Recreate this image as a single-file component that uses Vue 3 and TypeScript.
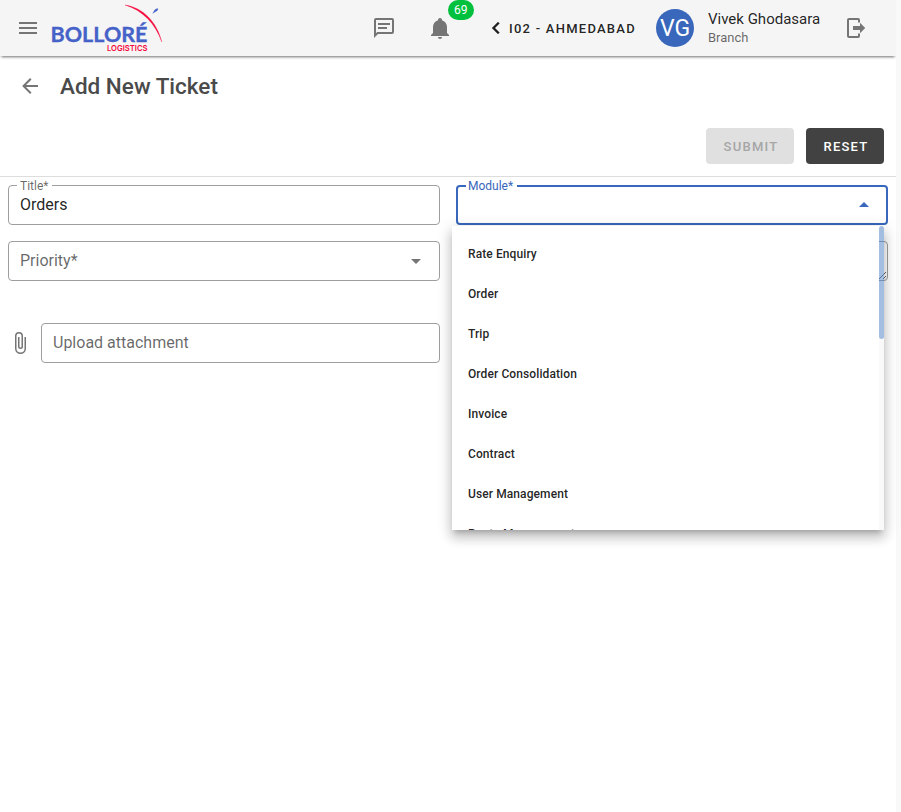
<script setup lang="ts">
import { ref } from 'vue'

interface Option {
  id: number
  label: string
}

const title = ref('Orders')
const description = ref('')
const notifications = ref(69)
const modules: Option[] = [
  'Rate Enquiry',
  'Order',
  'Trip',
  'Order Consolidation',
  'Invoice',
  'Contract',
  'User Management',
  'Route Management',
].map((label, id) => ({ id, label }))
</script>

<template>
  <div class="page">
    <div class="content">
      <header class="bar">
        <svg class="icon menu-icon" viewBox="0 0 24 24"><path d="M3,6H21V8H3V6M3,11H21V13H3V11M3,16H21V18H3V16Z" /></svg>
        <svg class="logo" viewBox="0 0 120 56" role="img" aria-label="Bolloré Logistics">
          <text class="brand" x="5.500" y="42.300" textLength="97" lengthAdjust="spacingAndGlyphs">BOLLORÉ</text>
          <text class="sub" x="62" y="50.800" textLength="40.500" lengthAdjust="spacingAndGlyphs">LOGISTICS</text>
          <path class="red" d="M80 5C98 7.500 112 22 116.800 42C110.500 24 98 10.500 80 5Z" />
          <path class="blue" d="M107.300 13.800L109.700 9.800L112.200 8.300L113.200 9L112.300 10.800Z" />
        </svg>
        <svg class="icon message-icon" viewBox="0 0 24 24"><path d="M20,2A2,2 0 0,1 22,4V16A2,2 0 0,1 20,18H6L2,22V4C2,2.890 2.900,2 4,2H20M4,4V17.170L5.170,16H20V4H4M6,7H18V9H6V7M6,11H15V13H6V11Z" /></svg>
        <div class="bell">
          <svg class="icon" viewBox="0 0 24 24"><path d="M21,19V20H3V19L5,17V11C5,7.900 7.030,5.170 10,4.290C10,4.190 10,4.100 10,4A2,2 0 0,1 12,2A2,2 0 0,1 14,4C14,4.100 14,4.190 14,4.290C16.970,5.170 19,7.900 19,11V17L21,19M14,21A2,2 0 0,1 12,23A2,2 0 0,1 10,21" /></svg>
          <span class="badge">{{ notifications }}</span>
        </div>
        <button class="branch" type="button">
          <svg class="chevron" viewBox="0 0 24 24"><path d="M15.410,16.580L10.830,12L15.410,7.410L14,6L8,12L14,18L15.410,16.580Z" /></svg>
          <span>I02 - Ahmedabad</span>
        </button>
        <div class="avatar">VG</div>
        <div class="user">
          <span class="name">Vivek Ghodasara</span>
          <span class="role">Branch</span>
        </div>
        <svg class="icon logout" viewBox="0 0 24 24"><path d="M4 2H13A2 2 0 0 1 15 4V6.500H13V4H4V20H13V17.500H15V20A2 2 0 0 1 13 22H4A2 2 0 0 1 2 20V4A2 2 0 0 1 4 2ZM8 10H15V6.800L20.200 12L15 17.200V14H8Z" /></svg>
      </header>

      <div class="heading">
        <svg class="icon back" viewBox="0 0 24 24"><path d="M20,11V13H8L13.500,18.500L12.080,19.920L4.160,12L12.080,4.080L13.500,5.500L8,11H20Z" /></svg>
        <h1>Add New Ticket</h1>
      </div>

      <div class="actions">
        <button class="btn submit" type="button" disabled>Submit</button>
        <button class="btn reset" type="button">Reset</button>
      </div>

      <form class="form" @submit.prevent>
        <fieldset class="field titled">
          <legend>Title*</legend>
          <input v-model="title" type="text" aria-label="Title" />
        </fieldset>
        <div class="select">
          <fieldset class="field titled active">
            <legend>Module*</legend>
            <svg class="icon caret" viewBox="0 0 24 24"><path d="M7,15L12,10L17,15H7Z" /></svg>
          </fieldset>
          <div class="dropdown">
            <ul class="options">
              <li v-for="option in modules" :key="option.id">{{ option.label }}</li>
            </ul>
            <div class="track">
              <div class="thumb"></div>
              <div class="rest"></div>
            </div>
          </div>
        </div>
        <div class="field plain">
          <span>Priority*</span>
          <svg class="icon caret" viewBox="0 0 24 24"><path d="M7,10L12,15L17,10H7Z" /></svg>
        </div>
        <textarea v-model="description" class="field area" aria-label="Description"></textarea>
        <div class="attachment">
          <svg class="icon" viewBox="0 0 24 24"><path d="M16.500,6V17.500A4,4 0 0,1 12.500,21.500A4,4 0 0,1 8.500,17.500V5A2.500,2.500 0 0,1 11,2.500A2.500,2.500 0 0,1 13.500,5V15.500A1,1 0 0,1 12.500,16.500A1,1 0 0,1 11.500,15.500V6H10V15.500A2.500,2.500 0 0,0 12.500,18A2.500,2.500 0 0,0 15,15.500V5A4,4 0 0,0 11,1A4,4 0 0,0 7,5V17.500A5.500,5.500 0 0,0 12.500,23A5.500,5.500 0 0,0 18,17.500V6H16.500Z" /></svg>
          <div class="field plain"><span>Upload attachment</span></div>
        </div>
      </form>
    </div>
    <div class="page-scroll"></div>
  </div>
</template>

<style>
body {
  background: #fff;
  overflow: hidden;
}
</style>

<style scoped>
.page,
.page * {
  box-sizing: border-box;
}
.page {
  display: flex;
  height: 812px;
  font-family: Roboto, sans-serif;
  color: rgba(0, 0, 0, 0.87);
}
.content {
  width: 896px;
}
.page-scroll {
  width: 5px;
  background: #f9f9f9;
}
.icon {
  display: block;
  flex: none;
  width: 24px;
  height: 24px;
  fill: #757575;
}
.bar {
  display: flex;
  align-items: center;
  height: 56px;
  padding-left: 16px;
  background: #f5f5f5;
  box-shadow: 0 3px 2px -2px rgba(0, 0, 0, 0.3), 0 2px 3px -1px rgba(0, 0, 0, 0.25), 0 1px 4px -1px rgba(0, 0, 0, 0.12);
}
.logo {
  width: 120px;
  height: 56px;
  margin-left: 5px;
}
.brand {
  font: 700 20px Lato, sans-serif;
  fill: #4562c8;
  stroke: #4562c8;
  stroke-width: 0.300;
}
.sub {
  font: 600 8px Inter, sans-serif;
  fill: #f5093c;
}
.red {
  fill: #f5093c;
  stroke: #f5093c;
  stroke-width: 0.300;
}
.blue {
  fill: #4562c8;
}
.message-icon {
  margin-left: 207px;
}
.bell {
  position: relative;
  margin-left: 32px;
}
.badge {
  position: absolute;
  left: 20px;
  top: -16px;
  height: 20px;
  padding: 4px 6px;
  border-radius: 10px;
  background: #00c03e;
  color: #fff;
  font-size: 12px;
  line-height: 12px;
}
button {
  border: 0;
  font: 500 13px Roboto, sans-serif;
  letter-spacing: 1.250px;
  text-transform: uppercase;
}
.branch {
  display: flex;
  align-items: center;
  width: 151px;
  margin-left: 32px;
  padding: 0;
  background: none;
  color: rgba(0, 0, 0, 0.87);
  white-space: nowrap;
}
.chevron {
  flex: none;
  width: 24px;
  height: 24px;
  margin-right: 1px;
  fill: currentColor;
  stroke: currentColor;
  stroke-width: 0.300;
}
.avatar {
  width: 38px;
  height: 38px;
  margin-left: 21px;
  border-radius: 50%;
  background: #3867bb;
  color: #fff;
  font-size: 23px;
  line-height: 40px;
  text-align: center;
}
.user {
  display: flex;
  flex-direction: column;
  width: 137px;
  margin-left: 14px;
}
.name {
  font-size: 15px;
  line-height: 19px;
}
.role {
  color: rgba(0, 0, 0, 0.6);
  font-size: 13px;
  line-height: 18px;
}
.heading {
  display: flex;
  align-items: center;
  gap: 18px;
  height: 60px;
  padding-left: 18px;
}
.back {
  fill: #757575;
}
h1 {
  margin: 0;
  color: #4a4a4a;
  font-size: 22.500px;
  font-weight: 500;
  line-height: 32px;
}
.actions {
  display: flex;
  justify-content: flex-end;
  gap: 12px;
  height: 61px;
  padding: 12px 12px 12px 0;
  border-bottom: 1px solid #ddd;
}
.btn {
  height: 36px;
  padding: 0 0 0 2px;
  border-radius: 4px;
}
.submit {
  width: 88px;
  background: #e0e0e0;
  color: #a6a6a6;
}
.reset {
  width: 78px;
  background: #424242;
  color: #fff;
}
.form {
  display: grid;
  grid-template-columns: 432px 432px;
  grid-template-rows: 40px 40px 40px;
  column-gap: 16px;
  padding: 8px;
  row-gap: 16px;
}
.field {
  display: flex;
  min-width: 0;
  margin: 0;
  border: 1px solid #9e9e9e;
  border-radius: 4px;
  background: #fff;
}
.titled {
  height: 47px;
  margin-top: -7px;
  padding: 0 11px 0 8px;
  background: none;
}
legend {
  height: 15px;
  padding: 0 4px 0 3px;
  color: rgba(0, 0, 0, 0.6);
  font-size: 12px;
  line-height: 17px;
}
input {
  display: block;
  width: 100%;
  height: 22px;
  padding: 0 3px;
  border: 0;
  outline: 0;
  background: none;
  color: rgba(0, 0, 0, 0.87);
  font: 16px Roboto, sans-serif;
}
.active {
  height: 46px;
  margin-top: -6px;
  padding-right: 10px;
  border: 2px solid #3867bb;
}
.active legend {
  height: 14px;
  padding: 0 4px 0 2px;
  color: #3867bb;
  line-height: 14px;
}
.active .caret {
  margin: -1px 0 0 auto;
  fill: #3867bb;
}
.select {
  position: relative;
}
.dropdown {
  position: absolute;
  z-index: 2;
  top: 41px;
  left: -4px;
  display: flex;
  width: 432px;
  height: 304px;
  overflow: hidden;
  box-shadow: 0 5px 5px -3px rgba(0, 0, 0, 0.2), 0 8px 10px 1px rgba(0, 0, 0, 0.14), 0 3px 14px 2px rgba(0, 0, 0, 0.12);
}
.options {
  flex: 1;
  height: 336px;
  margin: 0;
  padding: 8px 16px;
  background: #fff;
  list-style: none;
}
.options li {
  height: 40px;
  font-size: 12px;
  font-weight: 500;
  letter-spacing: 0.100px;
  line-height: 40px;
}
.track {
  display: flex;
  flex-direction: column;
  width: 5px;
  height: 304px;
}
.thumb {
  height: 113px;
  border-radius: 3px;
  background: rgba(73, 125, 196, 0.5);
}
.rest {
  flex: 1;
  background: #f9f9f9;
}
.plain {
  align-items: center;
  justify-content: space-between;
  height: 40px;
  padding: 0 11px;
  color: rgba(0, 0, 0, 0.6);
  font-size: 16px;
}
.plain span {
  padding-bottom: 2px;
}
.area {
  width: 432px;
  height: 40px;
}
.attachment {
  display: flex;
  align-items: center;
  gap: 9px;
  margin-top: 26px;
  height: 40px;
}
.attachment .plain {
  flex: 1;
}
</style>
